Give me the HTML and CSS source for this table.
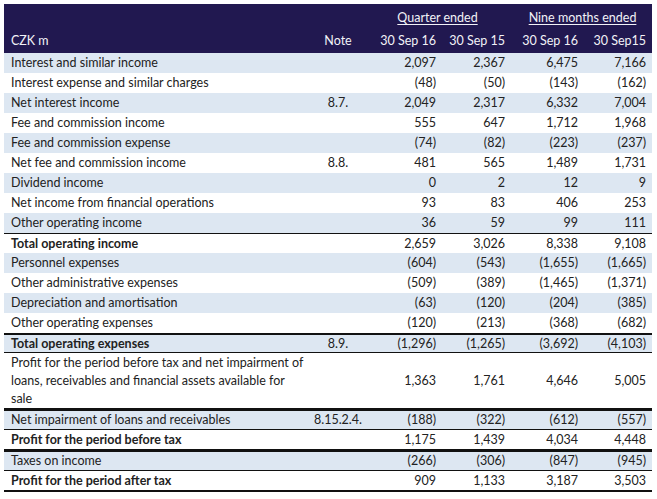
FILE: index.html
```html
<!DOCTYPE html>
<html>
<head>
<meta charset="utf-8">
<link rel="stylesheet" href="styles.css">
</head>
<body>
<table class="fin">
  <colgroup>
    <col class="c-label"><col class="c-note"><col class="c-q1"><col class="c-q2"><col class="c-n1"><col class="c-n2">
  </colgroup>
  <thead>
    <tr class="h1">
      <th></th><th></th>
      <th colspan="2" class="grp grp-q"><span>Quarter ended</span></th>
      <th colspan="2" class="grp grp-n"><span>Nine months ended</span></th>
    </tr>
    <tr class="h2">
      <th class="lbl">CZK m</th><th class="note">Note</th>
      <th class="num">30 Sep 16</th><th class="num">30 Sep 15</th><th class="num">30 Sep 16</th><th class="num">30 Sep15</th>
    </tr>
  </thead>
  <tbody>
    <tr class="alt"><td>Interest and similar income</td><td class="note"></td><td class="num">2,097</td><td class="num">2,367</td><td class="num">6,475</td><td class="num">7,166</td></tr>
    <tr><td>Interest expense and similar charges</td><td class="note"></td><td class="num">(48)</td><td class="num">(50)</td><td class="num">(143)</td><td class="num">(162)</td></tr>
    <tr class="alt"><td>Net interest income</td><td class="note">8.7.</td><td class="num">2,049</td><td class="num">2,317</td><td class="num">6,332</td><td class="num">7,004</td></tr>
    <tr><td>Fee and commission income</td><td class="note"></td><td class="num">555</td><td class="num">647</td><td class="num">1,712</td><td class="num">1,968</td></tr>
    <tr class="alt"><td>Fee and commission expense</td><td class="note"></td><td class="num">(74)</td><td class="num">(82)</td><td class="num">(223)</td><td class="num">(237)</td></tr>
    <tr><td>Net fee and commission income</td><td class="note">8.8.</td><td class="num">481</td><td class="num">565</td><td class="num">1,489</td><td class="num">1,731</td></tr>
    <tr class="alt"><td>Dividend income</td><td class="note"></td><td class="num">0</td><td class="num">2</td><td class="num">12</td><td class="num">9</td></tr>
    <tr><td>Net income from financial operations</td><td class="note"></td><td class="num">93</td><td class="num">83</td><td class="num">406</td><td class="num">253</td></tr>
    <tr class="alt"><td>Other operating income</td><td class="note"></td><td class="num">36</td><td class="num">59</td><td class="num">99</td><td class="num">111</td></tr>
    <tr class="total rule-thin"><td>Total operating income</td><td class="note"></td><td class="num">2,659</td><td class="num">3,026</td><td class="num">8,338</td><td class="num">9,108</td></tr>
    <tr class="alt"><td>Personnel expenses</td><td class="note"></td><td class="num">(604)</td><td class="num">(543)</td><td class="num">(1,655)</td><td class="num">(1,665)</td></tr>
    <tr><td>Other administrative expenses</td><td class="note"></td><td class="num">(509)</td><td class="num">(389)</td><td class="num">(1,465)</td><td class="num">(1,371)</td></tr>
    <tr class="alt"><td>Depreciation and amortisation</td><td class="note"></td><td class="num">(63)</td><td class="num">(120)</td><td class="num">(204)</td><td class="num">(385)</td></tr>
    <tr><td>Other operating expenses</td><td class="note"></td><td class="num">(120)</td><td class="num">(213)</td><td class="num">(368)</td><td class="num">(682)</td></tr>
    <tr class="alt total rule-mid"><td>Total operating expenses</td><td class="note">8.9.</td><td class="num">(1,296)</td><td class="num">(1,265)</td><td class="num">(3,692)</td><td class="num">(4,103)</td></tr>
    <tr class="tall rule-thin"><td>Profit for the period before tax and net impairment of<br>loans, receivables and financial assets available for<br>sale</td><td class="note"></td><td class="num">1,363</td><td class="num">1,761</td><td class="num">4,646</td><td class="num">5,005</td></tr>
    <tr class="alt rule-thick"><td>Net impairment of loans and receivables</td><td class="note">8.15.2.4.</td><td class="num">(188)</td><td class="num">(322)</td><td class="num">(612)</td><td class="num">(557)</td></tr>
    <tr class="total rule-thin"><td>Profit for the period before tax</td><td class="note"></td><td class="num">1,175</td><td class="num">1,439</td><td class="num">4,034</td><td class="num">4,448</td></tr>
    <tr class="alt rule-thick"><td>Taxes on income</td><td class="note"></td><td class="num">(266)</td><td class="num">(306)</td><td class="num">(847)</td><td class="num">(945)</td></tr>
    <tr class="total rule-thin last"><td>Profit for the period after tax</td><td class="note"></td><td class="num">909</td><td class="num">1,133</td><td class="num">3,187</td><td class="num">3,503</td></tr>
  </tbody>
</table>
</body>
</html>
```

FILE: styles.css
```css
html, body {
  margin: 0;
  padding: 0;
  background: #ffffff;
}
body {
  padding: 4px 5px 0 4px;
  font-family: "Lato", "Open Sans", sans-serif;
  font-size: 12.5px;
  color: #222222;
}
.fin {
  border-collapse: collapse;
  width: 648px;
  table-layout: fixed;
}
.c-label { width: 296px; }
.c-note { width: 80px; }
.c-q1 { width: 62px; }
.c-q2 { width: 69px; }
.c-n1 { width: 73px; }
.c-n2 { width: 68px; }

thead tr {
  background: #211850;
  color: #f2f2f7;
}
thead th {
  font-weight: normal;
  padding: 0;
}
.h1 { height: 26px; }
.h1 th { vertical-align: middle; }
.h2 { height: 23px; }
.h2 th { vertical-align: top; padding-top: 3px; }
.grp span {
  text-decoration: underline;
  text-decoration-thickness: 1px;
  text-underline-offset: 2px;
}
.grp-q { padding-right: 16px; text-align: center; }
.grp-n { padding-left: 2px; text-align: center; }
.lbl { text-align: left; padding-left: 7px; }

td {
  padding: 0;
  height: 20px;
  vertical-align: middle;
  line-height: 18px;
}
td:first-child { padding-left: 7px; white-space: nowrap; }
.note { text-align: center; padding-right: 4px; }
.num { text-align: right; padding-right: 6px; }
th.num { text-align: right; padding-right: 6px; }

.alt { background: #dde7f2; }
.total td { font-weight: 700; }
.total td.num, .total td.note { font-weight: normal; }

.rule-thin td { border-top: 1px solid #111111; height: 19px; line-height: 16px; }
.rule-mid td { border-top: 2px solid #111111; border-bottom: 1px solid #111111; height: 17px; line-height: 16px; }
.rule-thick td { border-top: 3px solid #111111; height: 18px; line-height: 16px; }
.tall td { height: 55px; line-height: 18px; }
.last td { border-bottom: 2px solid #111111; height: 19px; }
```
